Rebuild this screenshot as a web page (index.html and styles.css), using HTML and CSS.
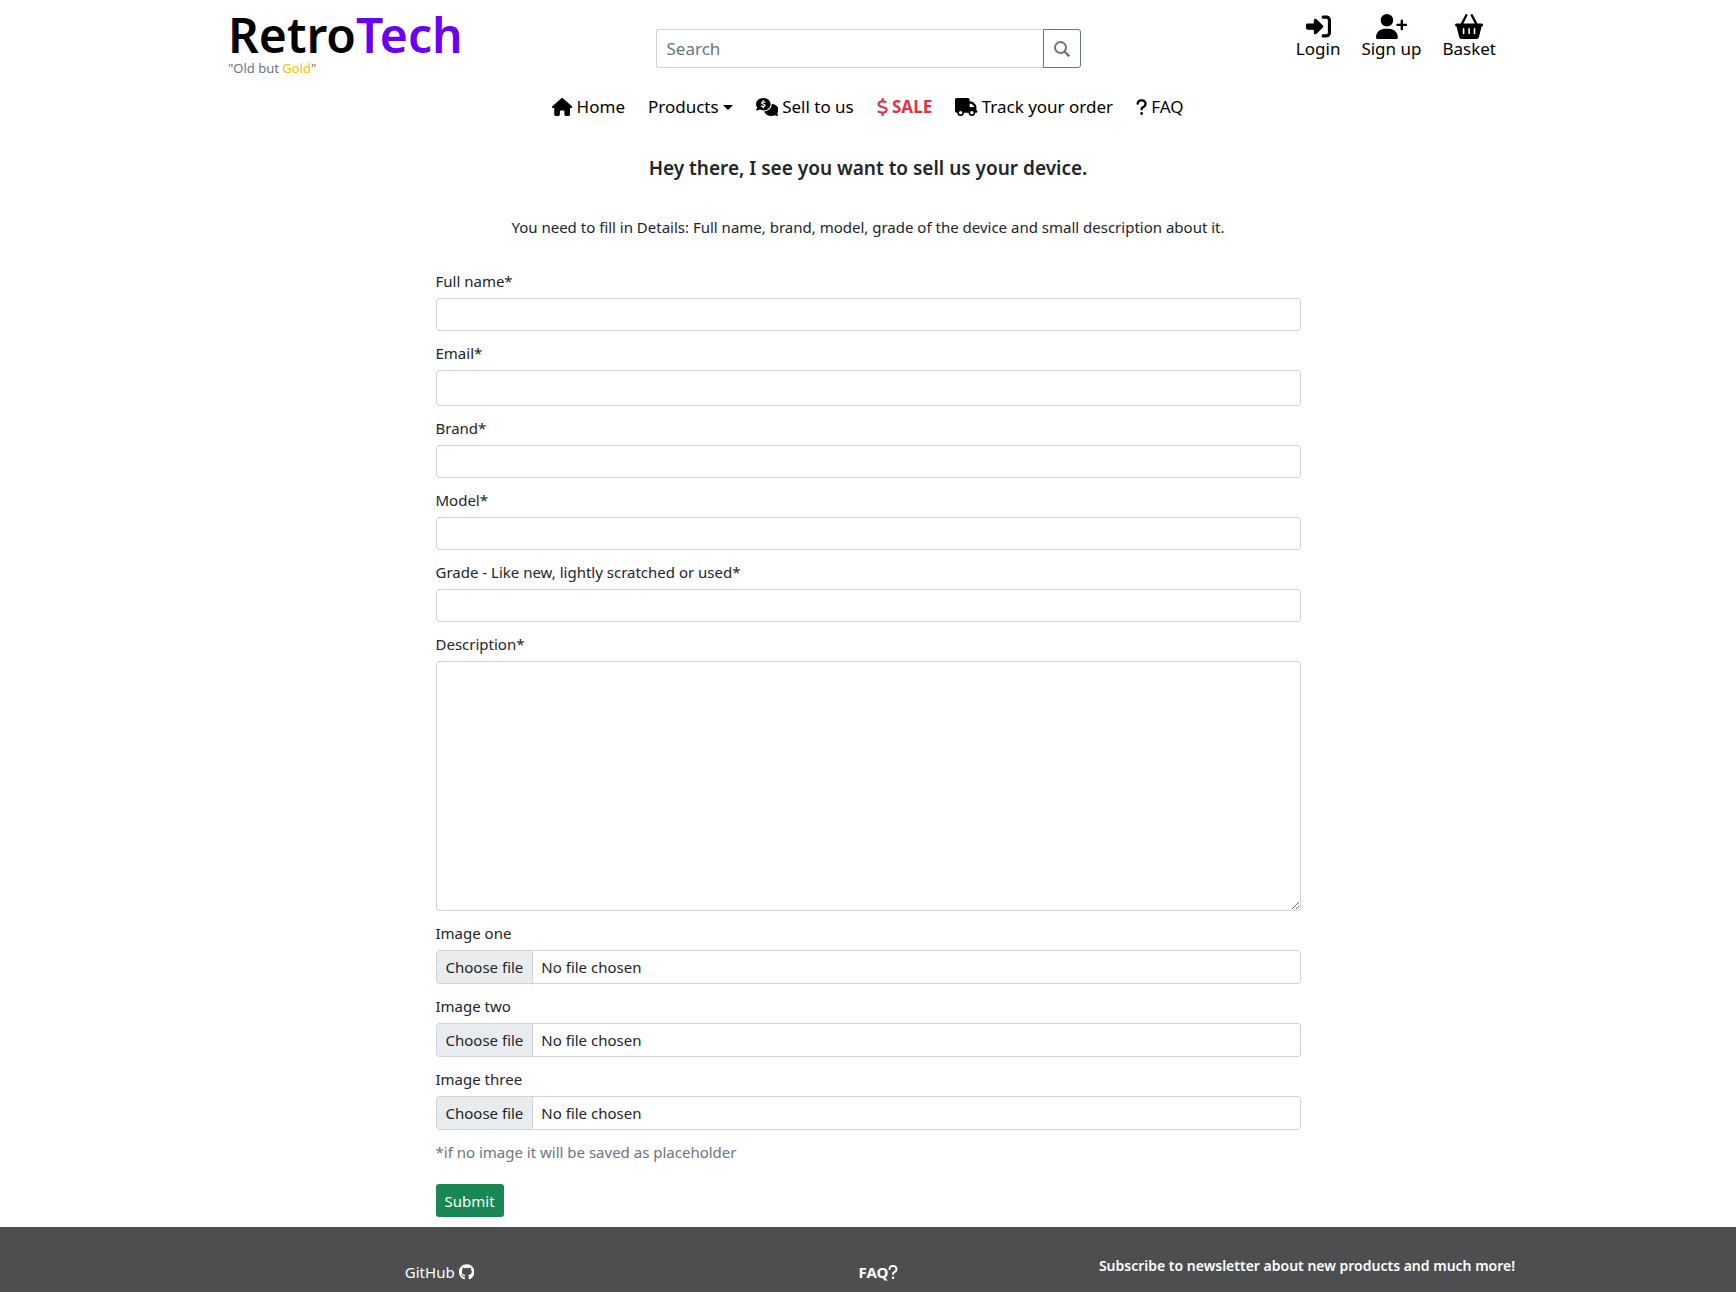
FILE: index.html
```html
<!DOCTYPE html>
<html lang="en">
<head>
<meta charset="utf-8">
<meta name="viewport" content="width=device-width, initial-scale=1">
<title>RetroTech - Sell to us</title>
<link rel="stylesheet" href="styles.css">
</head>
<body>
<header class="header">
  <div class="topbar">
    <a class="brand" href="#">
      <span class="brand-name">Retro<span class="brand-accent">Tech</span></span>
      <span class="tagline">"Old but <span class="gold">Gold</span>"</span>
    </a>
    <form class="search" role="search">
      <input class="search-input" type="search" placeholder="Search" aria-label="Search">
      <button class="search-button" type="button" aria-label="Search">
        <svg class="icon-search" viewBox="0 0 16 16" fill="none" stroke="currentColor" stroke-width="2"><circle cx="6.5" cy="6.5" r="5.5"/><path d="M10.5 10.5L15.3 15.3" stroke-width="2.4"/></svg>
      </button>
    </form>
    <nav class="account" aria-label="Account">
      <a class="account-link" href="#"><svg class="icon-account" viewBox="0 0 512 512"><path d="M217.9 105.9L340.7 228.7c7.2 7.2 11.3 17.1 11.3 27.3s-4.1 20.1-11.3 27.3L217.9 406.1c-6.4 6.4-15 9.9-24 9.9c-18.7 0-33.9-15.2-33.9-33.9l0-62.1L32 320c-17.7 0-32-14.3-32-32l0-64c0-17.7 14.3-32 32-32l128 0 0-62.1c0-18.7 15.2-33.9 33.9-33.9c9 0 17.6 3.6 24 9.9zM352 416l64 0c17.7 0 32-14.3 32-32l0-256c0-17.7-14.3-32-32-32l-64 0c-17.7 0-32-14.3-32-32s14.3-32 32-32l64 0c53 0 96 43 96 96l0 256c0 53-43 96-96 96l-64 0c-17.7 0-32-14.3-32-32s14.3-32 32-32z"/></svg>Login</a>
      <a class="account-link" href="#"><svg class="icon-account" viewBox="0 0 640 512"><path d="M96 128a128 128 0 1 1 256 0A128 128 0 1 1 96 128zM0 482.3C0 383.8 79.8 304 178.3 304h91.4C368.2 304 448 383.8 448 482.3c0 16.4-13.3 29.7-29.7 29.7H29.7C13.3 512 0 498.7 0 482.3zM504 312V248H440c-13.3 0-24-10.7-24-24s10.7-24 24-24h64V136c0-13.3 10.7-24 24-24s24 10.7 24 24v64h64c13.3 0 24 10.7 24 24s-10.7 24-24 24H552v64c0 13.3-10.7 24-24 24s-24-10.7-24-24z"/></svg>Sign up</a>
      <a class="account-link" href="#"><svg class="icon-account" viewBox="0 0 576 512"><path d="M253.3 35.1c6.1-11.8 1.5-26.3-10.2-32.4s-26.3-1.5-32.4 10.2L117.6 192H32c-17.7 0-32 14.3-32 32s14.3 32 32 32L83.9 463.5C91 492 116.6 512 146 512H430c29.4 0 55-20 62.1-48.5L544 256c17.7 0 32-14.3 32-32s-14.3-32-32-32H458.4L365.3 12.9C359.2 1.2 344.7-3.4 332.9 2.7s-16.3 20.6-10.2 32.4L404.3 192H171.7L253.3 35.1zM192 304v96c0 8.8-7.2 16-16 16s-16-7.2-16-16V304c0-8.8 7.2-16 16-16s16 7.2 16 16zm96-16c8.8 0 16 7.2 16 16v96c0 8.8-7.2 16-16 16s-16-7.2-16-16V304c0-8.8 7.2-16 16-16zm128 16v96c0 8.8-7.2 16-16 16s-16-7.2-16-16V304c0-8.8 7.2-16 16-16s16 7.2 16 16z"/></svg>Basket</a>
    </nav>
  </div>
  <nav class="menu" aria-label="Main">
    <a class="menu-link" href="#"><svg class="icon-menu" viewBox="0 0 576 512"><path d="M575.8 255.5c0 18-15 32.1-32 32.1h-32l.7 160.2c0 2.7-.2 5.4-.5 8.1V472c0 22.1-17.9 40-40 40H456c-1.1 0-2.2 0-3.3-.1c-1.4 .1-2.8 .1-4.2 .1H416 392c-22.1 0-40-17.9-40-40V448 384c0-17.7-14.3-32-32-32H256c-17.7 0-32 14.3-32 32v64 24c0 22.1-17.9 40-40 40H160 128.1c-1.5 0-3-.1-4.5-.2c-1.2 .1-2.4 .2-3.6 .2H104c-22.1 0-40-17.9-40-40V360c0-.9 0-1.9 .1-2.8V287.6H32c-18 0-32-14-32-32.1c0-9 3-17 10-24L266.4 8c7-7 15-8 22-8s15 2 21 7L564.8 231.5c8 7 12 15 11 24z"/></svg>Home</a>
    <a class="menu-link" href="#">Products<span class="caret"></span></a>
    <a class="menu-link" href="#"><svg class="icon-menu" viewBox="0 0 640 512"><path d="M208 352c114.9 0 208-78.8 208-176S322.9 0 208 0S0 78.8 0 176c0 38.6 14.7 74.3 39.6 103.4c-3.5 9.4-8.7 17.7-14.2 24.7c-4.8 6.2-9.7 11-13.3 14.3c-1.8 1.6-3.3 2.9-4.3 3.7c-.5 .4-.9 .7-1.1 .8l-.2 .2C1 327.2-1.4 334.4 .8 340.9S9.1 352 16 352c21.8 0 43.8-5.6 62.1-12.5c9.2-3.5 17.8-7.4 25.3-11.4C134.1 343.3 169.8 352 208 352zM448 176c0 112.3-99.1 196.9-216.5 207C255.8 457.4 336.4 512 432 512c38.2 0 73.9-8.7 104.7-23.9c7.5 4 16 7.9 25.2 11.4c18.3 6.9 40.3 12.5 62.1 12.5c6.9 0 13.1-4.5 15.2-11.1c2.1-6.6-.2-13.8-5.8-17.9l-.2-.2c-.2-.2-.6-.4-1.1-.8c-1-.8-2.5-2-4.3-3.7c-3.6-3.3-8.5-8.1-13.3-14.3c-5.5-7-10.7-15.4-14.2-24.7c24.9-29 39.6-64.7 39.6-103.4c0-92.8-84.9-168.9-192.6-175.5c.4 5.1 .6 10.3 .6 15.5z"/><path d="M256 120C225 104 162 104 162 141C162 184 256 164 256 210C256 249 191 248 160 230M208 74V112M208 240V280" fill="none" stroke="#fff" stroke-width="36" stroke-linecap="round"/></svg>Sell to us</a>
    <a class="menu-link menu-sale" href="#"><svg class="icon-menu" viewBox="0 0 320 512"><path d="M160 0c17.7 0 32 14.3 32 32V67.7c1.6 .2 3.1 .4 4.7 .7c.4 .1 .7 .1 1.1 .2l48 8.8c17.4 3.2 28.9 19.9 25.7 37.2s-19.9 28.9-37.2 25.7l-47.5-8.7c-31.3-4.6-58.9-1.5-78.3 6.2s-27.2 18.3-29 28.1c-2 10.7-.5 16.7 1.2 20.4c1.8 3.9 5.5 8.3 12.8 13.2c16.3 10.7 41.3 17.7 73.7 26.3l2.9 .8c28.6 7.6 63.6 16.8 89.6 33.8c14.2 9.3 27.6 21.9 35.9 39.5c8.5 17.9 10.3 37.9 6.4 59.2c-6.9 38-33.1 63.4-65.6 76.7c-13.7 5.6-28.6 9.2-44.4 11V480c0 17.7-14.3 32-32 32s-32-14.3-32-32V445.1c-.4-.1-.9-.1-1.3-.2l-.2 0c-24.4-3.8-64.5-14.3-91.5-26.3c-16.1-7.2-23.4-26.1-16.2-42.2s26.1-23.4 42.2-16.2c20.9 9.3 55.3 18.5 75.2 21.6c31.9 4.7 58.2 2 76-5.3c16.9-6.9 24.6-16.9 26.8-28.9c1.9-10.6 .4-16.7-1.3-20.4c-1.9-4-5.6-8.4-13-13.3c-16.4-10.7-41.5-17.7-74-26.3l-2.8-.7C119.4 279.3 84.4 270 58.4 253c-14.2-9.3-27.5-22-35.8-39.6c-8.4-17.9-10.1-37.9-6.1-59.2C23.7 116 52.3 91.2 84.8 78.3c13.3-5.3 27.9-8.9 43.2-11V32c0-17.7 14.3-32 32-32z"/></svg>SALE</a>
    <a class="menu-link" href="#"><svg class="icon-menu" viewBox="0 0 640 512"><path d="M48 0C21.5 0 0 21.5 0 48V368c0 26.5 21.5 48 48 48H64c0 53 43 96 96 96s96-43 96-96H384c0 53 43 96 96 96s96-43 96-96h32c17.7 0 32-14.3 32-32s-14.3-32-32-32V288 256 237.3c0-17-6.7-33.3-18.7-45.3L512 114.7c-12-12-28.3-18.7-45.3-18.7H416V48c0-26.5-21.5-48-48-48H48zM416 160h50.7L544 237.3V256H416V160zM112 416a48 48 0 1 1 96 0 48 48 0 1 1 -96 0zm368-48a48 48 0 1 1 0 96 48 48 0 1 1 0-96z"/></svg>Track your order</a>
    <a class="menu-link" href="#"><svg class="icon-menu" viewBox="0 0 320 512"><path d="M80 160c0-35.3 28.7-64 64-64h32c35.3 0 64 28.7 64 64v3.6c0 21.8-11.1 42.1-29.4 53.8l-42.2 27.1c-25.2 16.2-40.4 44.1-40.4 74V320c0 17.7 14.3 32 32 32s32-14.3 32-32v-1.4c0-8.2 4.2-15.8 11-20.2l42.2-27.1c36.6-23.6 58.8-64.1 58.8-107.7V160c0-70.7-57.3-128-128-128H144C73.3 32 16 89.3 16 160c0 17.7 14.3 32 32 32s32-14.3 32-32zm80 320a40 40 0 1 0 0-80 40 40 0 1 0 0 80z"/></svg>FAQ</a>
  </nav>
</header>
<main class="main">
  <h1 class="title">Hey there, I see you want to sell us your device.</h1>
  <p class="intro">You need to fill in Details: Full name, brand, model, grade of the device and small description about it.</p>
  <form class="sell-form">
    <div class="field"><label for="name">Full name*</label><input class="control" type="text" id="name"></div>
    <div class="field"><label for="email">Email*</label><input class="control control-email" type="email" id="email"></div>
    <div class="field"><label for="brand">Brand*</label><input class="control" type="text" id="brand"></div>
    <div class="field"><label for="model">Model*</label><input class="control" type="text" id="model"></div>
    <div class="field"><label for="grade">Grade - Like new, lightly scratched or used*</label><input class="control" type="text" id="grade"></div>
    <div class="field"><label for="description">Description*</label><textarea class="control control-area" id="description"></textarea></div>
    <div class="field"><label for="image1">Image one</label><div class="file"><span class="file-button">Choose file</span><span class="file-name">No file chosen</span><input class="file-input" type="file" id="image1"></div></div>
    <div class="field"><label for="image2">Image two</label><div class="file"><span class="file-button">Choose file</span><span class="file-name">No file chosen</span><input class="file-input" type="file" id="image2"></div></div>
    <div class="field"><label for="image3">Image three</label><div class="file"><span class="file-button">Choose file</span><span class="file-name">No file chosen</span><input class="file-input" type="file" id="image3"></div></div>
    <p class="note">*if no image it will be saved as placeholder</p>
    <button class="submit" type="button">Submit</button>
  </form>
</main>
<footer class="footer">
  <div class="footer-inner">
    <a class="footer-link" href="#">GitHub <svg class="icon-footer" viewBox="0 0 496 512"><path d="M244.8 8C106.1 8 0 113.3 0 252c0 110.9 69.8 205.8 169.5 239.2 12.8 2.3 17.3-5.6 17.3-12.1 0-6.2-.3-40.4-.3-61.4 0 0-70 15-84.7-29.8 0 0-11.4-29.1-27.8-36.6 0 0-22.9-15.7 1.6-15.4 0 0 24.9 2 38.6 25.8 21.9 38.6 58.6 27.5 72.9 20.9 2.3-16 8.8-27.1 16-33.7-55.9-6.2-112.3-14.3-112.3-110.5 0-27.5 7.6-41.3 23.6-58.9-2.6-6.5-11.1-33.3 2.6-67.9 20.9-6.5 69 27 69 27 20-5.6 41.5-8.5 62.8-8.5s42.8 2.9 62.8 8.5c0 0 48.1-33.6 69-27 13.7 34.7 5.2 61.4 2.6 67.9 16 17.7 25.8 31.5 25.8 58.9 0 96.5-58.9 104.2-114.8 110.5 9.2 7.9 17 22.9 17 46.4 0 33.7-.3 75.4-.3 83.6 0 6.5 4.6 14.4 17.3 12.1C428.2 457.8 496 362.9 496 252 496 113.3 383.5 8 244.8 8z"/></svg></a>
    <a class="footer-link footer-faq" href="#">FAQ<svg class="icon-footer" viewBox="0 0 320 512"><path d="M80 160c0-35.3 28.7-64 64-64h32c35.3 0 64 28.7 64 64v3.6c0 21.8-11.1 42.1-29.4 53.8l-42.2 27.1c-25.2 16.2-40.4 44.1-40.4 74V320c0 17.7 14.3 32 32 32s32-14.3 32-32v-1.4c0-8.2 4.2-15.8 11-20.2l42.2-27.1c36.6-23.6 58.8-64.1 58.8-107.7V160c0-70.7-57.3-128-128-128H144C73.3 32 16 89.3 16 160c0 17.7 14.3 32 32 32s32-14.3 32-32zm80 320a40 40 0 1 0 0-80 40 40 0 1 0 0 80z"/></svg></a>
    <h2 class="newsletter">Subscribe to newsletter about new products and much more!</h2>
  </div>
</footer>
</body>
</html>
```
FILE: styles.css
```css
* { box-sizing: border-box; }
body {
  margin: 0;
  min-height: 100vh;
  display: flex;
  flex-direction: column;
  font-family: "Noto Sans", "Open Sans", sans-serif;
  font-size: 15px;
  line-height: 24px;
  color: #212529;
  background: #fff;
}
a { color: inherit; text-decoration: none; }
svg { fill: currentColor; flex: none; }
input, textarea, button { font: inherit; color: inherit; }

.header { color: #000; padding: 8px 20px 0; }
.topbar {
  max-width: 1280px;
  margin: 0 auto;
  display: grid;
  grid-template-columns: 1fr minmax(200px, 425px) 1fr;
  align-items: start;
}
.brand { display: flex; flex-direction: column; }
.brand-name { font-size: 48px; line-height: 53px; font-weight: 600; }
.brand-accent { color: #6a00f5; }
.tagline { font-size: 13px; line-height: 15px; color: #6c757d; }
.gold { color: #ffc107; }

.search { display: flex; margin-top: 21px; }
.search-input {
  flex: 1;
  min-width: 0;
  height: 39px;
  padding: 0 10px;
  border: 1px solid #ced4da;
  border-right: 0;
  border-radius: 3px 0 0 3px;
  font-size: 17px;
  appearance: none;
}
.search-input::placeholder { color: #6c757d; opacity: 1; }
.search-button {
  display: grid;
  place-items: center;
  width: 38px;
  padding: 0;
  border: 1px solid #6c757d;
  border-radius: 0 3px 3px 0;
  background: #fff;
  color: #6c757d;
}
.icon-search { width: 16px; height: 16px; fill: none; }

.account { display: flex; justify-content: flex-end; gap: 21px; padding: 6px 12px 0 0; }
.account-link { display: flex; flex-direction: column; align-items: center; font-size: 17px; line-height: 20px; }
.icon-account { height: 25px; }

.menu { display: flex; justify-content: center; gap: 23px; margin-top: 19px; }
.menu-link { display: flex; align-items: center; gap: 4px; font-size: 17px; }
.icon-menu { height: 18px; }
.menu-sale { color: #dc3545; font-weight: 700; }
.caret {
  border: 5px solid transparent;
  border-top-color: currentColor;
  border-bottom: 0;
}

.main {
  width: 100%;
  max-width: 905px;
  margin: 0 auto;
  padding: 37px 20px 10px;
}
.title { margin: 0; font-size: 19px; line-height: 24px; font-weight: 600; text-align: center; }
.intro { margin: 35px 0 30px; text-align: center; }
.sell-form { display: flex; flex-direction: column; gap: 10px; }
.field { display: flex; flex-direction: column; gap: 5px; }
.control {
  display: block;
  width: 100%;
  height: 33px;
  padding: 3px 8px;
  border: 1px solid #ced4da;
  border-radius: 3px;
  background: #fff;
}
.control-email { height: 36px; }
.control-area { height: 250px; resize: vertical; }
.file {
  position: relative;
  display: flex;
  height: 34px;
  border: 1px solid #ced4da;
  border-radius: 3px;
  line-height: 32px;
  overflow: hidden;
}
.file-button { padding: 0 9px; background: #e9ecef; border-right: 1px solid #ced4da; }
.file-name { padding: 0 8px; }
.file-input { position: absolute; inset: 0; width: 100%; opacity: 0; }
.note { margin: 0 0 10px; color: #6c757d; }
.submit {
  align-self: flex-start;
  height: 33px;
  padding: 0 9px;
  border: 0;
  border-radius: 3px;
  background: #198754;
  color: #fff;
}

.footer { flex: 1; background: #4d4e50; color: #fff; padding: 26px 20px 8px; }
.footer-inner {
  max-width: 1296px;
  margin: 0 auto;
  display: grid;
  grid-template-columns: 1fr 1fr 418px;
}
.footer-link { display: flex; justify-content: center; align-items: center; gap: 4px; padding-top: 7px; }
.footer-faq { gap: 0; font-weight: 700; }
.icon-footer { height: 16px; }
.newsletter { margin: 0; font-size: 14px; line-height: 26px; font-weight: 600; text-align: center; }
```
